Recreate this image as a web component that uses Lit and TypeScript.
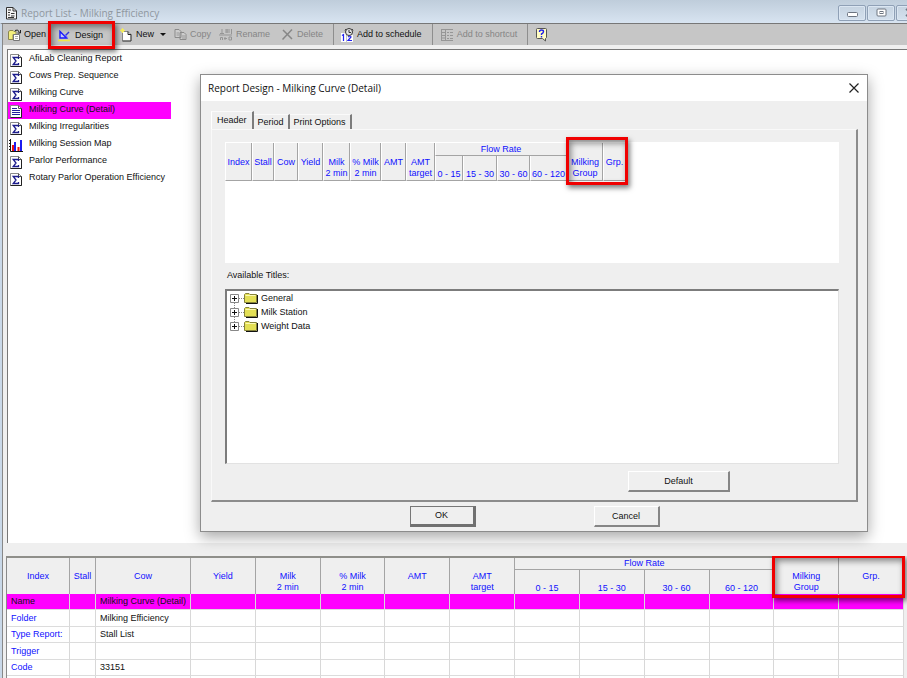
import { LitElement, html, css, svg, nothing } from "lit";
import { customElement, property, state } from "lit/decorators.js";
import { classMap } from "lit/directives/class-map.js";

const base = css`
  *, *::before, *::after { box-sizing: border-box; }
  button {
    font: inherit;
    color: inherit;
    background: none;
    border: 0;
    padding: 0;
    margin: 0;
    text-align: left;
    white-space: nowrap;
  }
  svg { display: block; flex: none; }
  table { border-collapse: separate; border-spacing: 0; table-layout: fixed; }
  th, td { padding: 0; font-weight: 400; }
  .mark {
    position: absolute;
    border: 3px solid #f00000;
    box-shadow: 2px 3px 5px rgba(0, 0, 0, 0.5), inset 2px 3px 6px rgba(0, 0, 0, 0.45);
    pointer-events: none;
    z-index: 2;
  }
`;

const page = svg`<path d="M1.5 1.5h8l3 3v9h-11z" fill="#fff" stroke="#8a8a8a"/><path d="M9.500 1.500v3h3" fill="none" stroke="#555"/><path d="M12.500 4.500v9h-11" fill="none" stroke="#222"/>`;

const icons: Record<string, unknown> = {
  report: html`<svg width="13" height="14" viewBox="0 0 13 14"><path d="M1.500 1.500h6.500l3.500 3.500v8h-10z" fill="#f4f4f4" stroke="#333"/><path d="M8 1.500V5h3.500" fill="none" stroke="#333"/><path d="M3 4h3M3 6.500h2M6 7.500h3.500M3 9h2M6 10h3.500M3 11.500h6" stroke="#333"/></svg>`,
  open: html`<svg width="14" height="14" viewBox="0 0 14 14"><path d="M.5 11.500V3.500l1.500-1h3l1 1h2v3H5v5z" fill="#f3ee7c" stroke="#8a8650"/><path d="M5.500 6.500h6v6h-6z" fill="#fff" stroke="#777"/><path d="M7 8.500h3M7 10.500h3" stroke="#aaa"/><path d="M7 2.500q3-2 4.500 2M12.500 2v3h-3" fill="none" stroke="#222"/></svg>`,
  design: html`<svg width="13" height="13" viewBox="0 0 13 13"><path d="M2 2.500v6.500h6.500z" fill="#c9c9f4" stroke="#1a1aff" stroke-width="1.400"/><path d="M11 3L7.500 6.500" stroke="#3333dd" stroke-width="1.400"/><path d="M7 5.500l2.500 3" stroke="#6a6aff"/><path d="M0 11.500h12" stroke="#f0e648" stroke-width="1.600"/></svg>`,
  new: html`<svg width="13" height="14" viewBox="0 0 13 14"><path d="M2.500 3.500h5.500l3 3v6.500h-8.500z" fill="#fff" stroke="#888"/><path d="M8 3.500v3h3" fill="none" stroke="#222"/><path d="M11 6.500V13H2.500" fill="none" stroke="#444"/><path d="M2.500 0v5M0 2.500h5M1 1l3 3M4 1L1 4" stroke="#f4ec62"/></svg>`,
  copy: html`<svg width="13" height="13" viewBox="0 0 13 13"><path d="M1 1.500h4l2 2v6H1zM6 4.500h4l2 2v5H6z" fill="#cdcdcd" stroke="#8b8b8b"/><path d="M2.500 5H5M2.500 7H5M8 8h3M8 10h3" stroke="#999"/></svg>`,
  rename: html`<svg width="14" height="13" viewBox="0 0 14 13"><path d="M3 1v4M1 5.500h4M8 1v4M6 2h5M6 4h5M12.500 1v5M0 7h13" stroke="#959595"/><path d="M1.500 12V9.500h2V12M6 9v3M5 10.500h3M10 9v3h2.500V9z" fill="none" stroke="#959595"/></svg>`,
  delete: html`<svg width="13" height="13" viewBox="0 0 13 13"><path d="M2 2l9 9M11 1.500L1.500 11.500" stroke="#878787" stroke-width="1.500"/></svg>`,
  schedule: html`<svg width="13" height="14" viewBox="0 0 13 14"><path d="M0 5h5v9H0zM6 7h6v7H6z" fill="#fff"/><path d="M1 7.500l1.500-1V13M7 9q3-2 3 0L7 12.500h4" fill="none" stroke="#2424f0" stroke-width="1.200"/><circle cx="8" cy="4" r="3.500" fill="#e6e6e6" stroke="#333"/><path d="M8 2v2.500h2M5 1L4 2.500M11 1l1 1.500" fill="none" stroke="#333"/></svg>`,
  shortcut: html`<svg width="14" height="14" viewBox="0 0 14 14"><path d="M1 1.500h12M1 4.500h4M1 12.500h12M1.500 1v12M5.500 1v12" stroke="#969696"/><path d="M7 4.500h2M10 4.500h3M7 7.500h2M10 7.500h3M7 10.500h2M10 10.500h3M2 7.500h3M2 10h3" stroke="#969696"/></svg>`,
  help: html`<svg width="13" height="15" viewBox="0 0 13 15"><path d="M2.500 1.500h8a1 1 0 0 1 1 1v8l-1 1v2.500l-3-2.500h-5a1 1 0 0 1-1-1v-8a1 1 0 0 1 1-1z" fill="#fffcc4" stroke="#555"/><path d="M4.500 5q0-2 2-2t2 1.700q0 1.300-2 2.300v1M6.500 9v1.500" fill="none" stroke="#2222e8" stroke-width="1.400"/></svg>`,
  sigma: html`<svg width="14" height="15" viewBox="0 0 14 15">${page}<path d="M9.500 6V4.500H4.200L7 8l-2.800 3.500h5.300V10" fill="none" stroke="#1c1c8c" stroke-width="1.300"/></svg>`,
  lines: html`<svg width="14" height="15" viewBox="0 0 14 15">${page}<path d="M3 4.500h5M3 6.500h8M3 8.500h8M3 10.500h8" stroke="#22229c"/></svg>`,
  bars: html`<svg width="14" height="15" viewBox="0 0 14 15"><path d="M1.500 1v12.500H14" fill="none" stroke="#111"/><path d="M0 2.500h1M0 5.500h1M0 8.500h1M0 11.500h1" stroke="#111"/><path d="M4 7v6M9.500 9v4" stroke="#f01010" stroke-width="2"/><path d="M6 4v9M12 2v11" stroke="#1c1cf0" stroke-width="2"/></svg>`,
  folder: html`<svg width="14" height="12" viewBox="0 0 14 12"><path d="M2 11.500h11.500V3" fill="none" stroke="#111"/><path d="M.5 10.500v-8l1-1h3.500l1 1h6.500v8z" fill="#e3df55" stroke="#85823a"/><path d="M1.500 3.500h10" stroke="#fbf9b5"/></svg>`,
};

interface Tool { id: string; label: string; off?: boolean; menu?: boolean; sep?: boolean; }

const tools: Tool[] = [
  { id: "open", label: "Open" },
  { id: "design", label: "Design" },
  { id: "new", label: "New", menu: true },
  { id: "copy", label: "Copy", off: true },
  { id: "rename", label: "Rename", off: true },
  { id: "delete", label: "Delete", off: true },
  { id: "schedule", label: "Add to schedule", sep: true },
  { id: "shortcut", label: "Add to shortcut", off: true, sep: true },
  { id: "help", label: "", sep: true },
];

@customElement("report-toolbar")
export class ReportToolbar extends LitElement {
  static styles = [base, css`
    :host { display: block; }
    .bar {
      display: flex;
      height: 21px;
      padding-left: 5px;
      background: #c6c6c6;
      color: #111;
    }
    .tool {
      display: flex;
      align-items: center;
      gap: 3px;
      position: relative;
      padding-right: 8px;
    }
    .off { color: #858585; }
    .open { padding: 0; width: 40px; gap: 2px; }
    .design { width: 66px; padding: 2px 0 0 10px; gap: 4px; }
    .new { padding-left: 6px; }
    .delete { padding: 0 10px 0 3px; }
    .sep { border-left: 1px solid #8e8e8e; padding: 0 10px 0 7px; }
    .arrow {
      border: 3px solid transparent;
      border-top-color: #111;
      border-bottom: 0;
      margin-left: 3px;
    }
    .mark { inset: -3px -1px -4px 0; }
  `];

  render() {
    return html`<div class="bar" role="toolbar" aria-label="Report actions">
      ${tools.map((t) => html`<button
        class=${classMap({ tool: true, off: !!t.off, sep: !!t.sep, [t.id]: true })}
        ?disabled=${t.off} aria-label=${t.label || "Help"}>
        ${icons[t.id]}<span>${t.label}</span>
        ${t.menu ? html`<span class="arrow"></span>` : nothing}
        ${t.id === "design" ? html`<span class="mark"></span>` : nothing}
      </button>`)}
    </div>`;
  }
}

const reports: [string, string][] = [
  ["sigma", "AfiLab Cleaning Report"],
  ["sigma", "Cows Prep. Sequence"],
  ["sigma", "Milking Curve"],
  ["lines", "Milking Curve (Detail)"],
  ["sigma", "Milking Irregularities"],
  ["bars", "Milking Session Map"],
  ["sigma", "Parlor Performance"],
  ["sigma", "Rotary Parlor Operation Efficiency"],
];

@customElement("report-list")
export class ReportList extends LitElement {
  @state() selected = 3;

  static styles = [base, css`
    :host { display: block; color: #111; }
    ul { list-style: none; margin: 0; padding: 1px 0 0; width: 163px; }
    .row {
      display: flex;
      align-items: center;
      gap: 6px;
      width: 100%;
      height: 17px;
      padding: 0 0 2px 1px;
    }
    .row svg { margin-top: 4px; }
    .on { background: #ff00ff; }
  `];

  render() {
    return html`<ul>${reports.map(([icon, name], i) => html`<li>
      <button class=${classMap({ row: true, on: i === this.selected })}
        @click=${() => { this.selected = i; }}>${icons[icon]}<span>${name}</span></button>
    </li>`)}</ul>`;
  }
}

const before = ["Index", "Stall", "Cow", "Yield", "Milk\n2 min", "% Milk\n2 min", "AMT", "AMT\ntarget"];
const rates = ["0 - 15", "15 - 30", "30 - 60", "60 - 120"];
const after = ["Milking\nGroup", "Grp."];

const headRows = () => html`
  <tr class="top">
    ${before.map((t) => html`<th class="tall" rowspan="2" scope="col">${t}</th>`)}
    <th class="flow" colspan="4" scope="colgroup">Flow Rate</th>
    ${after.map((t, i) => html`<th class="tall" rowspan="2" scope="col">${t}${i === 0 ? html`<span class="mark"></span>` : nothing}</th>`)}
  </tr>
  <tr class="sub">${rates.map((t) => html`<th class="rate" scope="col">${t}</th>`)}</tr>`;

const headStyles = css`
  th {
    color: #1010ff;
    background: #efefef;
    text-align: center;
    white-space: pre;
    line-height: 11px;
    border-right: 1px solid #a4a4a4;
    position: relative;
  }
  .tall { vertical-align: top; }
  .flow { border-bottom: 1px solid #a4a4a4; }
  .rate { vertical-align: bottom; }
`;

const records: [string, string][] = [
  ["Name", "Milking Curve (Detail)"],
  ["Folder", "Milking Efficiency"],
  ["Type Report:", "Stall List"],
  ["Trigger", ""],
  ["Code", "33151"],
  ["", ""],
];

@customElement("report-grid")
export class ReportGrid extends LitElement {
  static styles = [base, headStyles, css`
    :host { display: block; }
    table { width: 100%; border-left: 1px solid #8a8a8a; border-top: 2px solid #8f8f8a; }
    .c0 { width: 63px; }
    .c1 { width: 26px; }
    .c2 { width: 95px; }
    .top { height: 12px; }
    .sub { height: 24px; }
    .tall { padding-top: 13px; }
    .cell, .key {
      height: 16px;
      padding-left: 4px;
      text-align: left;
      white-space: nowrap;
      line-height: 12px;
      background: #fff;
      border-right: 1px solid #d8d8d8;
      border-bottom: 1px solid #dcdcdc;
      color: #111;
    }
    .key { color: #1010ff; }
    .rec:nth-child(even) .cell { height: 17px; }
    .on .cell, .on .key { background: #ff00ff; color: #111; }
    .mark { inset: -3px -67px -4px -2px; }
  `];

  render() {
    return html`<table>
      <colgroup><col class="c0" /><col class="c1" /><col class="c2" /><col span="11" /></colgroup>
      <thead>${headRows()}</thead>
      <tbody>${records.map(([key, value], i) => html`<tr class=${classMap({ rec: true, on: i === 0 })}>
        <th class="key" scope="row">${key}</th><td class="cell"></td><td class="cell">${value}</td>
        ${Array.from({ length: 11 }, () => html`<td class="cell"></td>`)}
      </tr>`)}</tbody>
    </table>`;
  }
}

const designWidths = [27, 22, 24, 25, 27, 31, 25, 29, 28, 34, 33, 37, 36, 23];

@customElement("design-dialog")
export class DesignDialog extends LitElement {
  @property({ type: String }) name = "";

  static styles = [base, headStyles, css`
    :host {
      display: block;
      background: #efefef;
      border: 1px solid #8c8c8c;
      box-shadow: 0 5px 14px rgba(0, 0, 0, 0.35);
      color: #111;
    }
    .title {
      display: flex;
      align-items: center;
      justify-content: space-between;
      height: 26px;
      padding: 0 8px 0 7px;
      background: #fff;
      font: 10px/14px "Open Sans", "Noto Sans", sans-serif;
    }
    .content { padding: 10px 9px 4px 10px; }
    .tabs { display: flex; align-items: flex-end; height: 18px; }
    .tab {
      height: 15px;
      padding: 0 4px;
      border-top: 1px solid #fafafa;
      border-right: 2px solid #7c7c7c;
    }
    .tab.on { height: 18px; padding: 0 5px; border-left: 1px solid #fff; }
    .pane {
      border: 1px solid #f9f9f9;
      border-right: 2px solid #8c8c8c;
      border-bottom: 2px solid #8c8c8c;
      padding: 12px 17px 8px 13px;
    }
    .sheet { height: 121px; background: #fff; padding-top: 1px; }
    .head { width: 401px; }
    .head th { border-bottom: 1px solid #a4a4a4; border-left: 1px solid #fff; }
    .top { height: 13px; }
    .sub { height: 25px; }
    .tall { padding-top: 14px; }
    .mark { inset: -6px -26px -5px -2px; }
    .caption { margin: 6px 2px 7px; line-height: 13px; }
    .tree {
      height: 175px;
      margin: 0;
      padding: 0 0 0 3px;
      list-style: none;
      background: #fff;
      border: 2px solid #7c7c7c;
      border-right: 1px solid #e2e2e2;
      border-bottom: 1px solid #e2e2e2;
    }
    .node { display: flex; align-items: center; height: 14px; position: relative; }
    .node + .node::before {
      content: "";
      position: absolute;
      left: 4px;
      top: -3px;
      height: 6px;
      border-left: 1px dotted #888;
    }
    .twig { width: 5px; border-top: 1px dotted #888; }
    .node span { margin-left: 3px; }
    .footer { display: flex; justify-content: flex-end; padding: 7px 109px 0 0; }
    .actions { display: flex; justify-content: center; gap: 118px; padding-top: 4px; }
    .push {
      width: 66px;
      height: 21px;
      text-align: center;
      border: 1px solid #fff;
      border-right: 2px solid #868686;
      border-bottom: 2px solid #868686;
    }
    .wide { width: 102px; }
    .main { border: 1px solid #777; border-right: 3px solid #707070; border-bottom: 3px solid #707070; }
  `];

  render() {
    return html`
      <div class="title"><span>Report Design - ${this.name}</span>
        <button aria-label="Close"><svg width="10" height="10" viewBox="0 0 10 10"><path d="M.5.5l9 9M9.500.5l-9 9" stroke="#222" stroke-width="1.200"/></svg></button>
      </div>
      <div class="content">
        <div class="tabs" role="tablist">
          <button class="tab on" role="tab" aria-selected="true">Header</button>
          <button class="tab" role="tab" aria-selected="false">Period</button>
          <button class="tab" role="tab" aria-selected="false">Print Options</button>
        </div>
        <div class="pane" role="tabpanel">
          <div class="sheet"><table class="head">
            <colgroup>${designWidths.map((w) => html`<col style="width:${w}px" />`)}</colgroup>
            <thead>${headRows()}</thead>
          </table></div>
          <div class="caption" id="titles">Available Titles:</div>
          <ul class="tree" aria-labelledby="titles">
            ${["General", "Milk Station", "Weight Data"].map((t) => html`<li class="node">
              <button aria-label="Expand ${t}"><svg width="9" height="9" viewBox="0 0 9 9"><path d="M.5.5h8v8h-8z" fill="#fff" stroke="#888"/><path d="M2 4.500h5M4.500 2v5" stroke="#111"/></svg></button>
              <i class="twig"></i>${icons.folder}<span>${t}</span></li>`)}
          </ul>
          <div class="footer"><button class="push wide">Default</button></div>
        </div>
        <div class="actions"><button class="push main">OK</button><button class="push">Cancel</button></div>
      </div>`;
  }
}

@customElement("app-root")
export class AppRoot extends LitElement {
  static styles = [base, css`
    :host {
      display: flex;
      flex-direction: column;
      position: relative;
      height: 100vh;
      overflow: hidden;
      background: #efefef;
      font: 9px/13px "Liberation Sans", Arial, sans-serif;
    }
    .caption {
      display: flex;
      align-items: center;
      gap: 3px;
      height: 23px;
      padding: 2px 0 0 5px;
      background: linear-gradient(#bfcddb, #d8e4f1);
      color: #8f979f;
      font: 10px/14px "Open Sans", "Noto Sans", sans-serif;
      overflow: hidden;
    }
    .buttons { display: flex; gap: 1px; margin: 0 -17px 0 auto; }
    .win {
      display: grid;
      place-items: center;
      width: 28px;
      height: 16px;
      border: 1px solid #8fa0b6;
      border-radius: 2px;
      box-shadow: inset 0 0 0 1px #dbe6f2;
    }
    .frame {
      flex: 1;
      min-height: 0;
      display: flex;
      flex-direction: column;
      border-left: 2px solid #c9d8e8;
      border-top: 1px solid #777;
      box-shadow: inset 1px 0 #888;
      padding-left: 1px;
    }
    .list {
      flex: 1;
      min-height: 0;
      margin: 4px 0 13px 4px;
      border-left: 1px solid #777;
      border-top: 1px solid #777;
      background: #fff;
    }
    .grid { flex: 0 0 18vh; margin-left: 3px; padding-right: 3px; overflow: hidden; }
    .dialog { position: absolute; left: 200px; right: 39px; top: 74px; }
  `];

  render() {
    return html`
      <header class="caption">${icons.report}<span>Report List - Milking Efficiency</span>
        <div class="buttons">
          <button class="win" aria-label="Minimize"><svg width="11" height="9" viewBox="0 0 11 9"><rect x=".5" y="4.500" width="10" height="4" rx="1" fill="#fff" stroke="#6c7480"/></svg></button>
          <button class="win" aria-label="Restore"><svg width="11" height="9" viewBox="0 0 11 9"><rect x="1" y="1" width="9" height="7" rx="1" fill="#fff" stroke="#6c7480"/><rect x="4" y="3.500" width="3" height="2" fill="none" stroke="#6c7480"/></svg></button>
          <button class="win" aria-label="Close"><svg width="11" height="9" viewBox="0 0 11 9"><path d="M1 1l9 7M10 1L1 8" stroke="#6c7480" stroke-width="2"/></svg></button>
        </div>
      </header>
      <main class="frame">
        <report-toolbar></report-toolbar>
        <report-list class="list"></report-list>
        <report-grid class="grid"></report-grid>
      </main>
      <design-dialog class="dialog" role="dialog" aria-label="Report Design" name="Milking Curve (Detail)"></design-dialog>`;
  }
}
